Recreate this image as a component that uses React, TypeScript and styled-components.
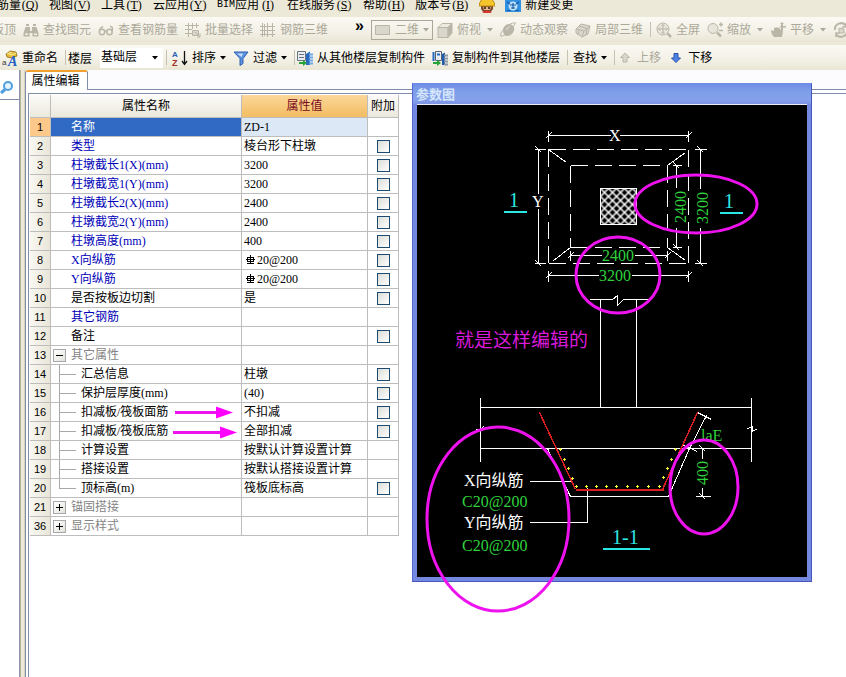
import React from 'react';
import styled, { createGlobalStyle, css } from 'styled-components';

const GlobalStyle = createGlobalStyle`
  * { box-sizing: border-box; }
  body {
    margin: 0;
    background: #fff;
    color: #000;
    font-family: "Liberation Serif", "Noto Sans CJK SC", sans-serif;
    font-size: 12px;
    overflow: hidden;
  }
  button, select, input { font: inherit; color: inherit; }
`;

/* ---------- layout ---------- */

const Page = styled.div`
  display: flex;
  flex-direction: column;
  min-height: 100vh;
  background: #ece9d8;
`;

const MenuBar = styled.nav`
  display: flex;
  align-items: flex-start;
  gap: 10px;
  height: 17px;
  margin-left: -3px;
  overflow: hidden;
  white-space: nowrap;
`;

const MenuItem = styled.button`
  display: flex;
  gap: 4px;
  flex: none;
  padding: 0;
  border: 0;
  background: none;
  line-height: 10px;
`;

const Accelerator = styled.span`
  width: 18px;
  text-align: center;
`;

const Latin = styled.span`
  font-family: "Liberation Mono", monospace;
  font-size: 10px;
`;

const MenuText = styled.span`
  display: flex;
`;

const ToolBar = styled.div`
  display: flex;
  align-items: center;
  height: 25px;
  margin-bottom: 3px;
  padding-left: 2px;
  overflow: hidden;
  white-space: nowrap;
  background: linear-gradient(#faf9f3, #f3f1e6 60%, #e9e6d5);

  & + & { margin-bottom: 0; }
`;

const ToolGroup = styled.div<{ $lead?: boolean }>`
  display: flex;
  align-items: center;
  flex: none;
  ${p => p.$lead && css`
    width: 376px;
    margin-left: -10px;
  `}
`;

const ToolButton = styled.button<{ $roomy?: boolean }>`
  display: flex;
  align-items: center;
  gap: 4px;
  flex: none;
  height: 22px;
  padding: 0 7px 0 0;
  border: 0;
  background: none;
  line-height: 16px;

  &:disabled { color: #aca899; }
  & > span + svg { margin-left: ${p => (p.$roomy ? 2 : 0)}px; }
`;

const Separator = styled.span<{ $tight?: boolean }>`
  flex: none;
  width: 1px;
  height: 15px;
  margin-right: ${p => (p.$tight ? 2 : 5)}px;
  background: #c5c2b2;
`;

const Chevron = styled.button`
  margin-left: auto;
  margin-right: 4px;
  padding: 0 0 8px;
  border: 0;
  background: none;
  font-family: "Liberation Sans", sans-serif;
  font-weight: bold;
  font-size: 16px;
  line-height: 12px;
`;

const ViewPicker = styled.button`
  display: flex;
  align-items: center;
  gap: 4px;
  flex: none;
  width: 62px;
  height: 20px;
  margin: 0 4px 0 3px;
  padding: 0 3px;
  border: 1px solid #aca899;
  background: none;
  line-height: 16px;

  &:disabled { color: #aca899; }
  & > svg:last-child { margin-left: auto; }
`;

const FloorLabel = styled.label`
  display: flex;
  align-items: center;
  gap: 8px;
`;

const FloorPicker = styled.span`
  display: flex;
  align-items: center;
  width: 63px;
  height: 20px;
  margin-right: 3px;
  padding-right: 5px;
  background: #fff;
`;

const FloorSelect = styled.select`
  appearance: none;
  flex: 1;
  min-width: 0;
  padding: 0 0 2px 1px;
  border: 0;
  outline: 0;
  background: none;
  line-height: 18px;
`;

const Workspace = styled.main`
  position: relative;
  display: flex;
  flex: 1;
  background: #fff;
`;

const SideStrip = styled.aside`
  flex: none;
  width: 20px;
  padding-top: 3px;
  border-right: 1px solid #8d96a8;
`;

const SideTab = styled.button`
  display: flex;
  align-items: center;
  width: 100%;
  height: 27px;
  padding: 3px 0 0;
  border: 0;
  border-bottom: 1px solid #7f8da8;
  background: #fff;
`;

const Splitter = styled.div`
  flex: none;
  width: 5px;
  border-left: 1px solid #b5b29e;
  border-right: 1px solid #d5d2c0;
  background: #ece9d8;
`;

const Dock = styled.section`
  display: flex;
  flex: 1;
  flex-direction: column;
  min-width: 0;
  background: #fcfcfe;
`;

const Tab = styled.button`
  align-self: flex-start;
  z-index: 1;
  width: 63px;
  height: 20px;
  margin: 0 0 -1px;
  padding: 0 2px 0 0;
  border: 1px solid #7f8da8;
  border-top: 2px solid #f0a030;
  border-bottom: 0;
  border-radius: 3px 3px 0 0;
  background: #fff;
  line-height: 16px;
`;

const DockBody = styled.div`
  flex: 1;
  padding: 3px 0 0 2px;
  border: solid #7f8da8;
  border-width: 1px 0 0 1px;
  background: #fff;
`;

const GridFrame = styled.div`
  height: 100%;
  padding: 1px;
  border: solid #7f8da8;
  border-width: 1px 0 0 1px;
`;

/* ---------- property table ---------- */

const PropertyTable = styled.table`
  width: 369px;
  table-layout: fixed;
  border-collapse: separate;
  border-spacing: 0;

  th, td {
    padding: 0;
    border: solid #bdbdbd;
    border-width: 0 1px 1px 0;
    font-weight: normal;
    white-space: nowrap;
  }
`;

const HeadCell = styled.th<{ $hot?: boolean }>`
  height: 23px;
  line-height: 22px;
  text-align: center;
  color: ${p => (p.$hot ? '#7a0a1e' : '#000')};
  background: ${p => (p.$hot ? 'linear-gradient(#fbd79a, #f3bd62)' : 'linear-gradient(#fcfbf8, #ebe8dc)')};
`;

const NumberCell = styled.th<{ $active?: boolean }>`
  height: 19px;
  font-family: "Liberation Sans", sans-serif;
  font-size: 11px;
  line-height: 18px;
  text-align: center;
  background: ${p => (p.$active ? '#fcc98a' : 'linear-gradient(90deg, #f8f7f1, #e9e6d8)')};
`;

type Tone = 'key' | 'plain' | 'group' | 'active';
const toneColor: Record<Tone, string> = {
  key: '#0000b8',
  plain: '#000',
  group: '#848484',
  active: '#fff',
};

const NameCell = styled.td<{ $tone: Tone }>`
  color: ${p => toneColor[p.$tone]};
  ${p => p.$tone === 'active' && css`background: #316ac5;`}
`;

const NameLine = styled.div`
  display: flex;
  height: 18px;
  line-height: 18px;
`;

const Gutter = styled.span<{ $wide?: boolean }>`
  display: flex;
  align-items: center;
  flex: none;
  width: ${p => (p.$wide ? 30 : 20)}px;
  padding-left: ${p => (p.$wide ? 0 : 2)}px;
`;

const Toggle = styled.button`
  display: flex;
  align-items: center;
  justify-content: center;
  width: 13px;
  height: 13px;
  padding: 0;
  border: 1px solid #a8a8a8;
  background: linear-gradient(135deg, #fff, #e2e2dc);
`;

const ValueCell = styled.td<{ $active?: boolean }>`
  background: ${p => (p.$active ? '#dce8f5' : '#fff')};
`;

const ValueLine = styled.div`
  display: flex;
  align-items: center;
  height: 18px;
  padding-left: 2px;
  line-height: 18px;
`;

const AttachCell = styled.td`
  background: #fff;
  text-align: center;
  line-height: 0;
`;

const Check = styled.input`
  appearance: none;
  width: 13px;
  height: 13px;
  margin: 0;
  border: 1px solid #1c4a70;
  background: linear-gradient(135deg, #dcdcd7, #fff);
  vertical-align: middle;
`;

type Row = {
  n: number;
  name: string;
  value?: string;
  tone?: Tone;
  check?: boolean;
  rebar?: boolean;
  child?: 'mid' | 'last';
  toggle?: 'open' | 'closed';
};

const rows: Row[] = [
  { n: 1, name: '名称', value: 'ZD-1', tone: 'active' },
  { n: 2, name: '类型', value: '棱台形下柱墩', tone: 'key', check: true },
  { n: 3, name: '柱墩截长1(X)(mm)', value: '3200', tone: 'key', check: true },
  { n: 4, name: '柱墩截宽1(Y)(mm)', value: '3200', tone: 'key', check: true },
  { n: 5, name: '柱墩截长2(X)(mm)', value: '2400', tone: 'key', check: true },
  { n: 6, name: '柱墩截宽2(Y)(mm)', value: '2400', tone: 'key', check: true },
  { n: 7, name: '柱墩高度(mm)', value: '400', tone: 'key', check: true },
  { n: 8, name: 'X向纵筋', value: '20@200', tone: 'key', check: true, rebar: true },
  { n: 9, name: 'Y向纵筋', value: '20@200', tone: 'key', check: true, rebar: true },
  { n: 10, name: '是否按板边切割', value: '是', check: true },
  { n: 11, name: '其它钢筋', tone: 'key' },
  { n: 12, name: '备注', check: true },
  { n: 13, name: '其它属性', tone: 'group', toggle: 'open' },
  { n: 14, name: '汇总信息', value: '柱墩', check: true, child: 'mid' },
  { n: 15, name: '保护层厚度(mm)', value: '(40)', check: true, child: 'mid' },
  { n: 16, name: '扣减板/筏板面筋', value: '不扣减', check: true, child: 'mid' },
  { n: 17, name: '扣减板/筏板底筋', value: '全部扣减', check: true, child: 'mid' },
  { n: 18, name: '计算设置', value: '按默认计算设置计算', child: 'mid' },
  { n: 19, name: '搭接设置', value: '按默认搭接设置计算', child: 'mid' },
  { n: 20, name: '顶标高(m)', value: '筏板底标高', check: true, child: 'last' },
  { n: 21, name: '锚固搭接', tone: 'group', toggle: 'closed' },
  { n: 36, name: '显示样式', tone: 'group', toggle: 'closed' },
];

const RebarMark = () => (
  <svg width="13" height="12" viewBox="0 0 13 12" fill="none" stroke="#000" shapeRendering="crispEdges">
    <path d="M3 3.500h7M2 5.500h9M3 7.500h7M3.500 3v5M9.500 3v5M6.500 1v9M3 9.500h7" />
  </svg>
);

const Branch = ({ last }: { last: boolean }) => (
  <svg width="30" height="18" viewBox="0 0 30 18" fill="none" stroke="#a8a8a8" shapeRendering="crispEdges">
    <path d={last ? 'M8.500 0v9.500H25' : 'M8.500 0v18M8.500 9.500H25'} />
  </svg>
);

const PropertyRow = ({ row }: { row: Row }) => (
  <tr>
    <NumberCell scope="row" $active={row.n === 1}>{row.n}</NumberCell>
    <NameCell $tone={row.tone ?? 'plain'}>
      <NameLine>
        <Gutter $wide={!!row.child}>
          {row.child && <Branch last={row.child === 'last'} />}
          {row.toggle && (
            <Toggle aria-label={row.name} aria-expanded={row.toggle === 'open'}>
              <svg width="9" height="9" viewBox="0 0 9 9" stroke="#000" shapeRendering="crispEdges">
                <path d={row.toggle === 'open' ? 'M1 4.500h7' : 'M1 4.500h7M4.500 1v7'} />
              </svg>
            </Toggle>
          )}
        </Gutter>
        {row.name}
      </NameLine>
    </NameCell>
    <ValueCell $active={row.n === 1}>
      <ValueLine>
        {row.rebar && <RebarMark />}
        {row.value}
      </ValueLine>
    </ValueCell>
    <AttachCell>
      {row.check && <Check type="checkbox" aria-label={`附加 ${row.name}`} />}
    </AttachCell>
  </tr>
);

/* ---------- icons ---------- */

const G = '#b9b6a8';
const L = '#d9d7cc';

const art: Record<string, React.ReactNode> = {
  binoculars: (
    <g fill={G}>
      <path d="M3 2h3v2H3zM10 2h3v2h-3zM2.500 5H7v4h2V5h4.500L15.500 11v3.500h-6V11h-3v3.500h-6V11z" />
      <path d="M2 11.500h3v1.500H2zM11 11.500h3v1.500h-3z" fill="#f3f1e6" />
    </g>
  ),
  glasses: (
    <g fill="none" stroke={G} strokeWidth="1.500">
      <circle cx="4" cy="10" r="2.700" /><circle cx="11.500" cy="10" r="2.700" />
      <path d="M6.700 9.500q1-1 2 0M1.500 9C2 6 4 4.500 5 5.500M14 9c.8-3 .5-5-2-4.500" />
    </g>
  ),
  batch: (
    <g fill="none" stroke={G}>
      <path d="M0 3.500h14M3.500 1v14M0 7.500h7M0 11.500h7M7.500 1v6M11.500 1v5" />
      <path d="M7.500 8.500h6v5h-6z" fill={L} /><path d="M10 10l5 5M15 11.500V15h-3" />
    </g>
  ),
  rebar: (
    <g fill="none" stroke={G}>
      <path d="M2.500 1v14M7.500 1v14M12.500 1v14M0 4.500h15M0 8.500h15M0 12.500h15M4.500 2v12" />
    </g>
  ),
  flat: <path d="M.5 3.500h14v9H.5z" fill={L} stroke={G} />,
  cube: (
    <g stroke={G}>
      <path d="M1 5.500h10v10H1z" fill={L} /><path d="M1 5.500l4-4h10l-4 4z" fill="#eceadf" /><path d="M11 5.500l4-4v9.500l-4 4.500z" fill={G} />
    </g>
  ),
  orbit: (
    <g fill={G}>
      <path d="M3 8c0-3 3-6 6-6s6 3 5 6.500S9.500 14.500 6.500 14 3 10 3 8z" />
      <path d="M15.500 1C13 6 7 12.500 1 14.500M1 14.500C0 12 1.500 9.500 3 8M15.500 1C13.500.5 11 1.500 9.500 2.500" fill="none" stroke={G} />
      <path d="M6 7q2-3 5-3Q8 6 6 9z" fill={L} />
    </g>
  ),
  local: (
    <g stroke={G}>
      <path d="M1 7l5-5 9 2-2 8-6 3-6-4z" fill={L} />
      <path d="M1 7l8 2 6-5M9 9l-2 6M4 4l8 2.500-1 6.500M4 8l-1 5" fill="none" />
    </g>
  ),
  full: (
    <g fill="none" stroke={G}>
      <circle cx="7" cy="7" r="6" fill="#e8e6db" /><path d="M7 2.500v9M2.500 7h9M5.500 4L7 2.500 8.500 4M5.500 10L7 11.500 8.500 10M4 5.500L2.500 7 4 8.500M10 5.500L11.500 7 10 8.500" /><path d="M11.500 11.500l3.500 3.500" strokeWidth="2.500" />
    </g>
  ),
  zoom: (
    <g fill="none" stroke={G}>
      <circle cx="6" cy="6.500" r="5" fill="#e8e6db" /><path d="M10 10.500l4 4" strokeWidth="2.500" /><path d="M12 2.500h4M14 .5v4M12 8.500h4" strokeWidth="1.500" />
    </g>
  ),
  pan: (
    <g fill={G}>
      <path d="M1 8l3 1V6q1.500-1 2 0V5.500q1.500-1 2 1l.5-1q1.500 0 1.500 2h1q2 0 2 2L12 15H4q-3-3-3-7z" />
      <path d="M12 0l2 2h-1v2h2V3l1 2-1 1.500v-1h-2V8h-2V5.500H9.500v-1H11V2h-1z" />
    </g>
  ),
  rotate: (
    <g fill="none" stroke={G} strokeWidth="2">
      <path d="M2 8a6 6 0 0 1 11-4M14 8A6 6 0 0 1 3 12" /><path d="M13 1v4H9M3 15v-4h4" strokeWidth="1.500" />
      <path d="M6 6l5 1v4H6z" fill={L} strokeWidth="1" />
    </g>
  ),
  rename: (
    <g>
      <path d="M4 4l4-3 6 1 1 4-5 2-5-1z" fill="#e3bc38" stroke="#8e6b12" strokeWidth=".8" />
      <path d="M5 3l5 2 4-2M7 2l3 1" stroke="#fff0a0" fill="none" />
      <text x="0" y="15" fontFamily="Liberation Sans" fontSize="8" fill="#333">a</text>
      <text x="6" y="16" fontFamily="Liberation Serif" fontStyle="italic" fontWeight="bold" fontSize="14" fill="#245fc4">A</text>
    </g>
  ),
  sort: (
    <g>
      <text x="0" y="7" fontFamily="Liberation Sans" fontWeight="bold" fontSize="8" fill="#2b62b8">A</text>
      <text x="0" y="16" fontFamily="Liberation Sans" fontWeight="bold" fontSize="9" fill="#a03226">Z</text>
      <path d="M12.500 1v12M10 11l2.500 3.500L15 11" fill="none" stroke="#111" strokeWidth="1.300" />
    </g>
  ),
  funnel: (
    <g>
      <path d="M1 2h14l-5 6.500v5L7 15.500v-7z" fill="#5d92e0" stroke="#2f5fae" /><path d="M4 3.500h6L8.500 7z" fill="#c5dcfa" />
    </g>
  ),
  copyFrom: (
    <g>
      <path d="M.5 1.500h8v9h-8z" fill="#e8ecf2" stroke="#69737f" /><path d="M2 4.500h5M2 7.500h5" stroke="#69737f" />
      <path d="M9 4l4-2.500V15H9z" fill="#2768c0" /><path d="M12 4.500h4M12 7.500h4M12 10.500h4M12 13.500h4" stroke="#6ca8e8" strokeWidth="2" />
      <path d="M2 12h4v-2l4 3-4 3v-2H2z" fill="#26a43a" />
    </g>
  ),
  copyTo: (
    <g>
      <path d="M3.500 1.500h6v9h-6z" fill="#e8ecf2" stroke="#5a6470" /><path d="M1.500 2v9M5 4.500h3" stroke="#2768c0" strokeWidth="2" />
      <path d="M10 4l3-1.500V15h-3z" fill="#1f5cac" /><path d="M12 5.500h4M12 8.500h4M12 11.500h4M12 14.500h4" stroke="#8a97a8" strokeWidth="2" />
      <path d="M1 12h4v-2.500L9 13l-4 3v-2H1z" fill="#26a43a" />
    </g>
  ),
  up: <path d="M8 3l4.500 4.500H10V12H6V7.500H3.500z" fill={L} stroke={G} />,
  down: <path d="M8 12.500L3.500 8H6V3.500h4V8h2.500z" fill="#4f83e6" stroke="#2450a8" />,
  worker: (
    <g>
      <path d="M2 5h12v4l-3 4H5L2 9z" fill="#7a4a30" /><path d="M0 6Q1-2 8-2t8 8z" fill="#f5c52c" stroke="#c08a12" />
      <path d="M4 7h8l-1 3H5z" fill="#e7b68d" /><path d="M5 8h2M9 8h2" stroke="#2a1a10" strokeWidth="1.500" />
      <path d="M3 12q5-3 10 0l-2 1H5z" fill="#d8372d" />
    </g>
  ),
  cloud: (
    <g>
      <rect width="16" height="12" fill="#2f8fe0" /><circle cx="8" cy="6" r="4.500" fill="#bfe2fb" />
      <path d="M2 2l3 2M14 2l-3 2M8 3v6M5 5h6M6 8h4M2 10.500h4M10 10.500h4" stroke="#1a5da6" strokeWidth="1.200" />
    </g>
  ),
};

const Glyph = styled.svg`
  display: block;
  flex: none;
`;

const Icon = ({ name }: { name: string }) => (
  <Glyph width="16" height="16" viewBox="0 0 16 16" aria-hidden="true">{art[name]}</Glyph>
);

const Caret = () => (
  <Glyph width="6" height="4" viewBox="0 0 6 4" fill="currentColor" aria-hidden="true">
    <path d="M0 0h6L3 3.500z" />
  </Glyph>
);

type ToolProps = { icon?: string; label?: string; off?: boolean; caret?: boolean; roomy?: boolean };

const Tool = ({ icon, label, off, caret, roomy }: ToolProps) => (
  <ToolButton disabled={off} aria-label={label ?? '旋转'} $roomy={roomy}>
    {icon && <Icon name={icon} />}
    {label && <span>{label}</span>}
    {caret && <Caret />}
  </ToolButton>
);

/* ---------- parameter window ---------- */

const ParamWindow = styled.section`
  position: absolute;
  left: 412px;
  top: 13px;
  display: flex;
  flex-direction: column;
  padding: 0 4px 4px;
  border: 1px solid #5467c8;
  border-color: #6f8ae8 #4556bc #4556bc #5467d6;
  background: #7488e0;
`;

const ParamTitle = styled.h2`
  height: 20px;
  margin: 0 -4px;
  padding: 1px 0 0 3px;
  background: linear-gradient(#6f8ee6, #7f9fe8 40%, #85a0ea 80%, #7d92e4);
  color: #d6e6fc;
  font-size: 13px;
  font-weight: bold;
  line-height: 20px;
`;

const Canvas = styled.svg`
  display: block;
  border: 1px solid #e8ecf4;
  border-width: 1px 0 0;
  background: #000;

  text {
    font-family: "Liberation Serif", "Noto Sans CJK SC", sans-serif;
    font-size: 16px;
    stroke: none;
  }
`;

const SectionMarks = styled.g`
  fill: #2ce6e6;

  && text { font-size: 20px; }
`;

const green = '#2fd23c';
const cyan = '#2ce6e6';

const barDots = [
  [560, 449], [564, 459], [568, 468], [572, 478],
  [576, 486], [586, 486], [596, 486], [606, 486], [616, 486], [627, 486], [637, 486], [648, 486], [659, 486],
  [663, 477], [667, 468], [671, 459], [675, 449],
];

const Drawing = () => (
  <Canvas width="390" height="473" viewBox="417 105 390 472" role="img" aria-label="参数图">
    <defs>
      <pattern id="hatch" width="8" height="8" patternUnits="userSpaceOnUse" x="600" y="188">
        <path d="M-1-1l10 10M9-1L-1 9" stroke="#fff" strokeWidth="1.500" />
      </pattern>
    </defs>
    <g transform="translate(.5 .5)" fill="none" stroke="#fff" shapeRendering="crispEdges">
      <path d="M548 135h62M619 135h69M548 130v11M688 130v11M545 138l6-6M685 138l6-6" />
      <path d="M538 149v44M538 208v55M534 149h11M534 263h11M535 146l6 6M535 260l6 6" />
      <path d="M548 149H688M548 263H688M548 149V263M688 149V263M570 165H667M570 247H667M570 165V247M667 165V247" strokeDasharray="17 7" />
      <path d="M548 149l18 13M685 152l-18 13M553 260l17-13M667 247l18 13" />
      <rect x="600" y="188" width="36" height="36" fill="url(#hatch)" />
      <path d="M676 165v22M676 227v20M672 165h9M672 247h9M673 162l6 6M673 244l6 6" />
      <path d="M700 149v39M700 227v36M694 149h12M694 263h12M697 146l6 6M697 260l6 6" />
      <path d="M570 255h31M634 255h33M570 250v10M667 250v10M567 258l6-6M664 258l6-6" />
      <path d="M548 275h50M631 275h57M548 270v11M688 270v11M545 278l6-6M685 278l6-6" />
      <path d="M589 299h23l5-4v10l6-6h25M600 299v108M636 299v108" />
      <path d="M480 407h271M480 448h271M480 397v64M751 397v64M475 429h5l3-3M747 428l5-2v5l5-3" />
      <path d="M547 448l23 48h98l21-48 17-33M697 412l14 7M683 445l14 6" />
      <path d="M529 481h42M529 522h58V487" />
      <path d="M702 448v10M702 487v9M695 496h15M697 448h10M699 445l6 6M699 493l6 6" />
      <path d="M539 412l36 77M662 489l35-77" stroke="#d81e1e" strokeWidth="1.500" />
      <path d="M575 489.500h88" stroke="#d81e1e" strokeWidth="2" />
      <path d="M503 211.500h23M719 212.500h23M602 548.500h47" stroke={cyan} strokeWidth="2" />
      <path d={barDots.map(([x, y]) => `M${x - 1.5} ${y}h3M${x} ${y - 1.5}v3`).join('')} stroke="#f4f43c" />
    </g>
    <g fill="#fff">
      <text x="609" y="141">X</text>
      <text x="532" y="207">Y</text>
      <text x="464" y="486">X向纵筋</text>
      <text x="464" y="528">Y向纵筋</text>
    </g>
    <g fill={green}>
      <text x="602" y="261">2400</text>
      <text x="599" y="281">3200</text>
      <text transform="translate(686 223) rotate(-90)">2400</text>
      <text transform="translate(708 224) rotate(-90)">3200</text>
      <text transform="translate(708 485) rotate(-90)">400</text>
      <text x="701" y="441">laE</text>
      <text x="462" y="507">C20@200</text>
      <text x="462" y="551">C20@200</text>
    </g>
    <SectionMarks>
      <text x="509" y="207">1</text>
      <text x="724" y="208">1</text>
      <text x="612" y="544">1-1</text>
    </SectionMarks>
  </Canvas>
);

const Notes = styled.svg`
  position: absolute;
  left: 0;
  top: 0;
  pointer-events: none;

  text {
    font-family: "Noto Sans CJK SC", sans-serif;
    font-size: 19px;
  }
`;

const Markup = () => (
  <Notes width="846" height="607" viewBox="0 70 846 607" fill="none" stroke="#ee12ee" strokeWidth="3">
    <ellipse cx="696" cy="204" rx="61" ry="29" />
    <ellipse cx="618" cy="275" rx="42" ry="38" />
    <ellipse cx="498" cy="519" rx="71" ry="92" />
    <ellipse cx="704" cy="487" rx="34" ry="47" />
    <path d="M175 412.500h42M173 432.500h47" />
    <path d="M216 406.500l17 6-17 6zM220 426.500l17 6-17 6z" fill="#ff00ff" stroke="none" />
    <text x="455" y="347" fill="#d81ad8" stroke="none">就是这样编辑的</text>
  </Notes>
);

/* ---------- page ---------- */

const menus: [string, string][] = [
  ['筋量', 'Q'], ['视图', 'V'], ['工具', 'T'], ['云应用', 'Y'],
  ['BIM应用', 'I'], ['在线服务', 'S'], ['帮助', 'H'], ['版本号', 'B'],
];

export default function App() {
  return (
    <Page>
      <GlobalStyle />
      <MenuBar>
        {menus.map(([label, key]) => (
          <MenuItem key={key}>
            <MenuText>
              {label.startsWith('BIM') ? <><Latin>BIM</Latin>{label.slice(3)}</> : label}
              <Accelerator>(<u>{key}</u>)</Accelerator>
            </MenuText>
          </MenuItem>
        ))}
        <MenuItem aria-label="用户"><Icon name="worker" /></MenuItem>
        <MenuItem><Icon name="cloud" />新建变更</MenuItem>
      </MenuBar>

      <ToolBar role="toolbar">
        <ToolGroup $lead>
          <Tool label="板顶" off />
          <Tool icon="binoculars" label="查找图元" off />
          <Tool icon="glasses" label="查看钢筋量" off />
          <Tool icon="batch" label="批量选择" off />
          <Tool icon="rebar" label="钢筋三维" off />
          <Chevron aria-label="更多">»</Chevron>
        </ToolGroup>
        <ToolGroup>
          <ViewPicker disabled><Icon name="flat" />二维<Caret /></ViewPicker>
          <Tool icon="cube" label="俯视" off caret roomy />
          <Tool icon="orbit" label="动态观察" off />
          <Tool icon="local" label="局部三维" off />
          <Separator />
          <Tool icon="full" label="全屏" off />
          <Tool icon="zoom" label="缩放" off caret roomy />
          <Tool icon="pan" label="平移" off caret roomy />
          <Tool icon="rotate" off />
        </ToolGroup>
      </ToolBar>

      <ToolBar role="toolbar">
        <Tool icon="rename" label="重命名" />
        <Separator $tight />
        <FloorLabel>
          楼层
          <FloorPicker>
            <FloorSelect defaultValue="base"><option value="base">基础层</option></FloorSelect>
            <Caret />
          </FloorPicker>
        </FloorLabel>
        <Separator />
        <Tool icon="sort" label="排序" caret />
        <Tool icon="funnel" label="过滤" caret />
        <Separator $tight />
        <Tool icon="copyFrom" label="从其他楼层复制构件" />
        <Tool icon="copyTo" label="复制构件到其他楼层" />
        <Separator />
        <Tool label="查找" caret />
        <Separator $tight />
        <Tool icon="up" label="上移" off />
        <Tool icon="down" label="下移" />
      </ToolBar>

      <Workspace>
        <SideStrip>
          <SideTab aria-label="搜索">
            <svg width="16" height="16" viewBox="0 0 16 16" fill="none" stroke="#4f9fe0">
              <circle cx="8" cy="6" r="4" fill="#e4f3ff" strokeWidth="2" />
              <path d="M5 9.500L1 13" strokeWidth="3" />
            </svg>
          </SideTab>
        </SideStrip>
        <Splitter />
        <Dock>
          <Tab>属性编辑</Tab>
          <DockBody>
            <GridFrame>
              <PropertyTable>
                <colgroup>
                  <col width="21" /><col width="191" /><col width="126" /><col width="31" />
                </colgroup>
                <thead>
                  <tr>
                    <HeadCell aria-label="序号" />
                    <HeadCell>属性名称</HeadCell>
                    <HeadCell $hot>属性值</HeadCell>
                    <HeadCell>附加</HeadCell>
                  </tr>
                </thead>
                <tbody>
                  {rows.map(row => <PropertyRow key={row.n} row={row} />)}
                </tbody>
              </PropertyTable>
            </GridFrame>
          </DockBody>
        </Dock>
        <ParamWindow>
          <ParamTitle>参数图</ParamTitle>
          <Drawing />
        </ParamWindow>
        <Markup />
      </Workspace>
    </Page>
  );
}
